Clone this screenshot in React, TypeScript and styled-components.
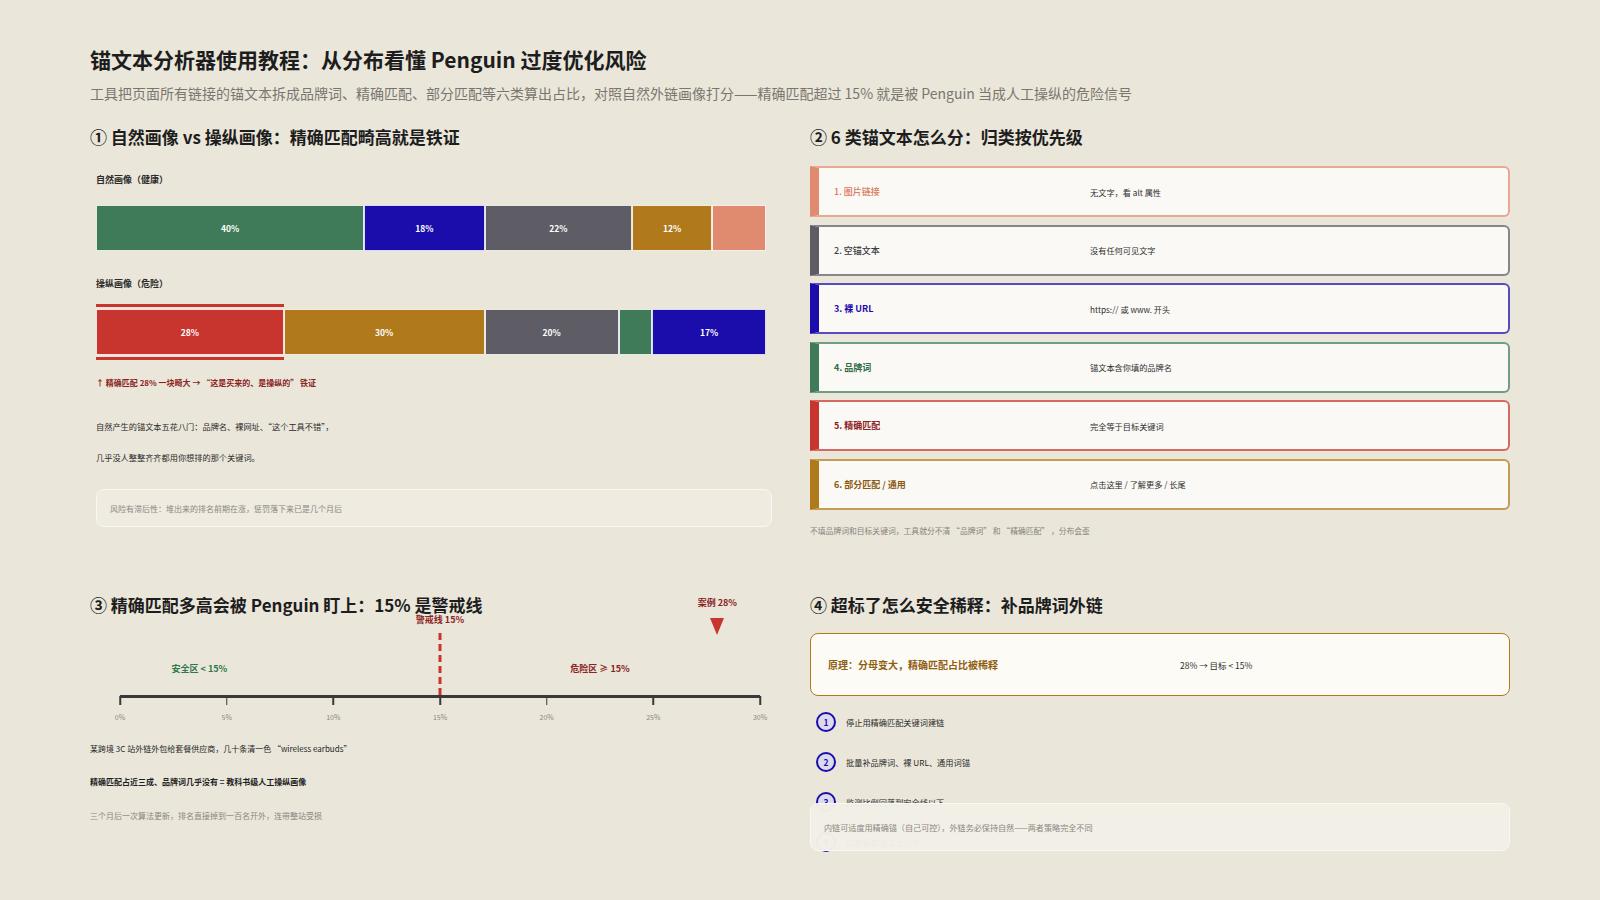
import styled, { createGlobalStyle } from "styled-components";

const GlobalStyle = createGlobalStyle`
  html, body {
    margin: 0;
    padding: 0;
    background: #eae6da;
  }
  body {
    font-family: "Noto Sans CJK SC", "Noto Sans", sans-serif;
    color: #222;
  }
  * {
    box-sizing: border-box;
  }
`;

const C = {
  green: "#3f7b58",
  blue: "#1a0dab",
  gray: "#5e5c64",
  gold: "#b07a1c",
  salmon: "#e08a70",
  red: "#c8352f",
  darkRed: "#8b2323",
};

const Page = styled.div`
  width: 1600px;
  height: 900px;
  padding: 44px 90px 0;
  overflow: hidden;
`;

const Title = styled.h1`
  margin: 0;
  font-size: 21px;
  line-height: 30px;
  font-weight: 700;
  color: #1d1d1d;
`;

const Subtitle = styled.p`
  margin: 9px 0 0;
  font-size: 14px;
  line-height: 20px;
  color: #7a766f;
`;

const Grid = styled.div`
  display: grid;
  grid-template-columns: 700px 700px;
  grid-template-rows: 430px 260px;
  column-gap: 20px;
  row-gap: 38px;
  margin-top: 21px;
`;

const Panel = styled.section`
  position: relative;
  display: flex;
  flex-direction: column;
`;

const SectionTitle = styled.h2`
  margin: 0;
  font-size: 17px;
  line-height: 26px;
  font-weight: 700;
  color: #1d1d1d;
`;

/* ① profiles */
const ProfileBlock = styled.div`
  display: flex;
  flex-direction: column;
  padding-left: 6px;
`;

const BarLabel = styled.div<{ $first?: boolean }>`
  margin: ${(p) => (p.$first ? "23px" : "26px")} 0 18px;
  font-size: 9px;
  line-height: 14px;
  font-weight: 700;
  color: #2a2a2a;
`;

const Bar = styled.div`
  display: flex;
  width: 670px;
  height: 46px;
`;

const Segment = styled.div<{ $w: number; $c: string; $hot?: boolean }>`
  flex: 0 0 ${(p) => p.$w}%;
  display: flex;
  align-items: center;
  justify-content: center;
  background: ${(p) => p.$c};
  border: 1px solid rgba(255, 255, 255, 0.85);
  color: #fff;
  font-size: 8.5px;
  font-weight: 600;
  box-shadow: ${(p) =>
    p.$hot
      ? `0 -2px 0 #eae6da, 0 -5px 0 ${C.red}, 0 2px 0 #eae6da, 0 5px 0 ${C.red}`
      : "none"};
`;

const Callout = styled.div`
  margin-top: 21px;
  font-size: 8px;
  line-height: 14px;
  font-weight: 700;
  color: ${C.darkRed};
`;

const Para = styled.p<{ $gap: number }>`
  margin: ${(p) => p.$gap}px 0 0;
  font-size: 8.2px;
  line-height: 14px;
  color: #2a2a2a;
`;

const SoftNote = styled.div`
  margin-top: 25px;
  width: 676px;
  height: 38px;
  display: flex;
  align-items: center;
  padding: 0 13px;
  background: #efebe1;
  border: 1px solid #faf8f3;
  border-radius: 8px;
  font-size: 8px;
  color: #8a8680;
`;

/* ② categories */
const ItemList = styled.div`
  display: flex;
  flex-direction: column;
  gap: 7.5px;
  margin-top: 16px;
`;

const Item = styled.div<{ $c: string }>`
  display: grid;
  grid-template-columns: 240px 1fr;
  column-gap: 16px;
  align-items: center;
  height: 51px;
  padding: 0 15px;
  background: #fbf9f5;
  border: 2px solid ${(p) => p.$c}bb;
  border-left: 9px solid ${(p) => p.$c};
  border-radius: 0 6px 6px 0;
`;

const ItemName = styled.span<{ $c: string; $bold?: boolean }>`
  font-size: 9px;
  font-weight: ${(p) => (p.$bold ? 700 : 500)};
  color: ${(p) => p.$c};
`;

const ItemDesc = styled.span`
  font-size: 8.2px;
  color: #2e2e2e;
`;

const FootNote = styled.div`
  margin-top: 15px;
  font-size: 7.8px;
  line-height: 12px;
  color: #87837b;
`;

/* ③ threshold */
const Chart = styled.div`
  position: relative;
  margin: -23px 0 0 30px;
  width: 640px;
  height: 130px;
`;

const Marker = styled.div<{ $at: number; $top: number; $c: string }>`
  position: absolute;
  left: ${(p) => p.$at}%;
  top: ${(p) => p.$top}px;
  transform: translateX(-50%);
  white-space: nowrap;
  font-size: 9px;
  line-height: 12px;
  font-weight: 700;
  color: ${(p) => p.$c};
`;

const Pointer = styled.div<{ $at: number }>`
  position: absolute;
  left: ${(p) => p.$at}%;
  top: 23px;
  transform: translateX(-50%);
  width: 0;
  height: 0;
  border-left: 7px solid transparent;
  border-right: 7px solid transparent;
  border-top: 17px solid ${C.red};
`;

const DashLine = styled.div<{ $at: number }>`
  position: absolute;
  left: ${(p) => p.$at}%;
  top: 38px;
  width: 3px;
  height: 65px;
  transform: translateX(-50%);
  background: repeating-linear-gradient(
    to bottom,
    ${C.red} 0 7px,
    transparent 7px 11px
  );
  z-index: 1;
`;

const Axis = styled.div`
  position: absolute;
  left: 0;
  right: 0;
  top: 100px;
  height: 3px;
  background: #3a3838;
`;

const Tick = styled.div<{ $at: number }>`
  position: absolute;
  left: ${(p) => p.$at}%;
  top: 101px;
  width: 1.5px;
  height: 9px;
  transform: translateX(-50%);
  background: #3a3838;
`;

const TickLabel = styled.div<{ $at: number }>`
  position: absolute;
  left: ${(p) => p.$at}%;
  top: 116px;
  transform: translateX(-50%);
  font-size: 7px;
  line-height: 12px;
  color: #8a8680;
`;

const CaseText = styled.p<{ $tone: "plain" | "strong" | "muted"; $gap: number }>`
  margin: ${(p) => p.$gap}px 0 0;
  font-size: 8px;
  line-height: 14px;
  font-weight: ${(p) => (p.$tone === "strong" ? 700 : 400)};
  color: ${(p) => (p.$tone === "muted" ? "#8a8680" : "#1f1f1f")};
`;

/* ④ dilution */
const PrincipleBox = styled.div`
  margin-top: 15px;
  height: 63px;
  display: grid;
  grid-template-columns: 1fr 1fr;
  column-gap: 40px;
  align-items: center;
  padding: 0 17px;
  background: #fdfbf6;
  border: 1.5px solid ${C.gold};
  border-radius: 8px;
`;

const PrincipleText = styled.span`
  font-size: 10px;
  font-weight: 700;
  color: #8f5e12;
`;

const PrincipleValue = styled.span`
  font-size: 8.5px;
  color: #2e2e2e;
`;

const Steps = styled.ol`
  list-style: none;
  margin: 16px 0 0;
  padding: 0 0 0 6px;
  display: flex;
  flex-direction: column;
  gap: 20px;
`;

const Step = styled.li`
  display: flex;
  align-items: center;
  gap: 10px;
  height: 20px;
  font-size: 8.2px;
  color: #2a2a2a;
`;

const StepNum = styled.span`
  flex: 0 0 20px;
  width: 20px;
  height: 20px;
  display: flex;
  align-items: center;
  justify-content: center;
  border: 2px solid ${C.blue};
  border-radius: 50%;
  background: #dcdaee;
  color: ${C.blue};
  font-size: 8.5px;
  font-weight: 700;
`;

const OverlayNote = styled.div`
  position: absolute;
  left: 0;
  right: 0;
  top: 211px;
  height: 48px;
  display: flex;
  align-items: center;
  padding: 0 13px;
  background: rgba(242, 239, 231, 0.98);
  border: 1px solid #faf8f3;
  border-radius: 8px;
  font-size: 8.1px;
  color: #8a8680;
`;

const natural = [
  { w: 40, c: C.green, t: "40%" },
  { w: 18, c: C.blue, t: "18%" },
  { w: 22, c: C.gray, t: "22%" },
  { w: 12, c: C.gold, t: "12%" },
  { w: 8, c: C.salmon, t: "" },
];

const manipulated = [
  { w: 28, c: C.red, t: "28%", hot: true },
  { w: 30, c: C.gold, t: "30%" },
  { w: 20, c: C.gray, t: "20%" },
  { w: 5, c: C.green, t: "" },
  { w: 17, c: C.blue, t: "17%" },
];

const categories = [
  { name: "1. 图片链接", desc: "无文字，看 alt 属性", c: C.salmon, text: "#d9785c", bold: false },
  { name: "2. 空锚文本", desc: "没有任何可见文字", c: C.gray, text: "#3c3b40", bold: false },
  { name: "3. 裸 URL", desc: "https:// 或 www. 开头", c: C.blue, text: C.blue, bold: true },
  { name: "4. 品牌词", desc: "锚文本含你填的品牌名", c: C.green, text: "#2f6b48", bold: true },
  { name: "5. 精确匹配", desc: "完全等于目标关键词", c: C.red, text: C.darkRed, bold: true },
  { name: "6. 部分匹配 / 通用", desc: "点击这里 / 了解更多 / 长尾", c: C.gold, text: "#8a5a10", bold: true },
];

const ticks = [0, 5, 10, 15, 20, 25, 30];
const pct = (v: number) => (v / 30) * 100;

const steps = [
  "停止用精确匹配关键词建链",
  "批量补品牌词、裸 URL、通用词锚",
  "监测比例回落到安全线以下",
  "定期复查锚文本分布",
];

export default function App() {
  return (
    <>
      <GlobalStyle />
      <Page>
        <Title>锚文本分析器使用教程：从分布看懂 Penguin 过度优化风险</Title>
        <Subtitle>
          工具把页面所有链接的锚文本拆成品牌词、精确匹配、部分匹配等六类算出占比，对照自然外链画像打分——精确匹配超过 15% 就是被 Penguin 当成人工操纵的危险信号
        </Subtitle>

        <Grid>
          <Panel>
            <SectionTitle>① 自然画像 vs 操纵画像：精确匹配畸高就是铁证</SectionTitle>
            <ProfileBlock>
              <BarLabel $first>自然画像（健康）</BarLabel>
              <Bar>
                {natural.map((s, i) => (
                  <Segment key={i} $w={s.w} $c={s.c}>
                    {s.t}
                  </Segment>
                ))}
              </Bar>
              <BarLabel>操纵画像（危险）</BarLabel>
              <Bar>
                {manipulated.map((s, i) => (
                  <Segment key={i} $w={s.w} $c={s.c} $hot={s.hot}>
                    {s.t}
                  </Segment>
                ))}
              </Bar>
              <Callout>↑ 精确匹配 28% 一块畸大 → “这是买来的、是操纵的” 铁证</Callout>
              <Para $gap={29}>自然产生的锚文本五花八门：品牌名、裸网址、“这个工具不错”，</Para>
              <Para $gap={17}>几乎没人整整齐齐都用你想排的那个关键词。</Para>
              <SoftNote>风险有滞后性：堆出来的排名前期在涨，惩罚落下来已是几个月后</SoftNote>
            </ProfileBlock>
          </Panel>

          <Panel>
            <SectionTitle>② 6 类锚文本怎么分：归类按优先级</SectionTitle>
            <ItemList>
              {categories.map((it) => (
                <Item key={it.name} $c={it.c}>
                  <ItemName $c={it.text} $bold={it.bold}>
                    {it.name}
                  </ItemName>
                  <ItemDesc>{it.desc}</ItemDesc>
                </Item>
              ))}
            </ItemList>
            <FootNote>不填品牌词和目标关键词，工具就分不清 “品牌词” 和 “精确匹配” ，分布会歪</FootNote>
          </Panel>

          <Panel>
            <SectionTitle>③ 精确匹配多高会被 Penguin 盯上：15% 是警戒线</SectionTitle>
            <Chart>
              <Marker $at={pct(28)} $top={2} $c={C.darkRed}>
                案例 28%
              </Marker>
              <Pointer $at={pct(28)} />
              <Marker $at={pct(15)} $top={19} $c={C.darkRed}>
                警戒线 15%
              </Marker>
              <Marker $at={12.4} $top={68} $c="#2f7a4c">
                安全区 &lt; 15%
              </Marker>
              <Marker $at={75} $top={68} $c={C.darkRed}>
                危险区 ≥ 15%
              </Marker>
              <Axis />
              <DashLine $at={pct(15)} />
              {ticks.map((t) => (
                <Tick key={`t${t}`} $at={pct(t)} />
              ))}
              {ticks.map((t) => (
                <TickLabel key={`l${t}`} $at={pct(t)}>
                  {t}%
                </TickLabel>
              ))}
            </Chart>
            <CaseText $tone="plain" $gap={17}>
              某跨境 3C 站外链外包给套餐供应商，几十条清一色 “wireless earbuds”
            </CaseText>
            <CaseText $tone="strong" $gap={19}>
              精确匹配占近三成、品牌词几乎没有 = 教科书级人工操纵画像
            </CaseText>
            <CaseText $tone="muted" $gap={20}>
              三个月后一次算法更新，排名直接掉到一百名开外，连带整站受损
            </CaseText>
          </Panel>

          <Panel>
            <SectionTitle>④ 超标了怎么安全稀释：补品牌词外链</SectionTitle>
            <PrincipleBox>
              <PrincipleText>原理：分母变大，精确匹配占比被稀释</PrincipleText>
              <PrincipleValue>28% → 目标 &lt; 15%</PrincipleValue>
            </PrincipleBox>
            <Steps>
              {steps.map((s, i) => (
                <Step key={s}>
                  <StepNum>{i + 1}</StepNum>
                  {s}
                </Step>
              ))}
            </Steps>
            <OverlayNote>内链可适度用精确锚（自己可控），外链务必保持自然——两者策略完全不同</OverlayNote>
          </Panel>
        </Grid>
      </Page>
    </>
  );
}
